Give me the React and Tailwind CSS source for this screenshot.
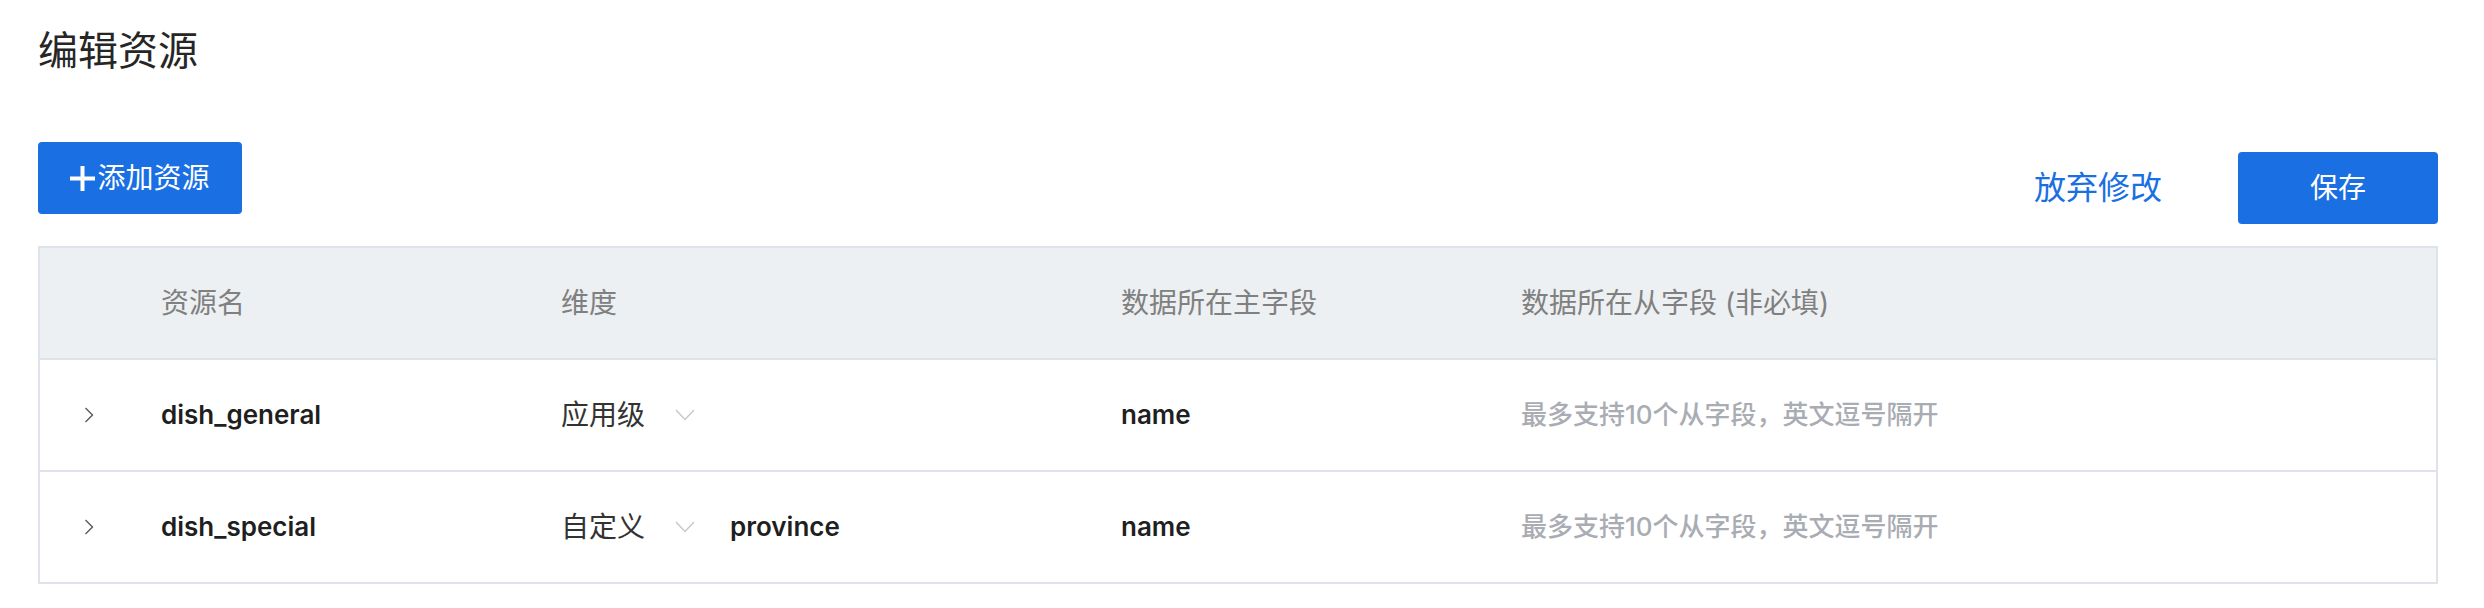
const rows = [
    { name: 'dish_general', level: '应用级', extra: '', field: 'name' },
    { name: 'dish_special', level: '自定义', extra: 'province', field: 'name' }
]

const cjk = { fontFamily: 'Inter, "Noto Sans CJK SC", sans-serif' }

function ArrowRight() {
    return (
        <svg width="10" height="16" viewBox="0 0 10 16" fill="none">
            <polyline points="1.5,1 8.5,8 1.5,15" stroke="#555a63" strokeWidth="1.4" />
        </svg>
    )
}

function ArrowDown() {
    return (
        <svg width="20" height="12" viewBox="0 0 20 12" fill="none">
            <polyline points="1,1 10,10.5 19,1" stroke="#c4c7ce" strokeWidth="1.4" />
        </svg>
    )
}

function App() {
    return (
        <div className="min-h-[608px] w-full bg-white pl-[38px] pr-[46px] pt-[31px]" style={cjk}>
            <h1 className="text-[40px] leading-none font-normal text-[#262626]">编辑资源</h1>

            <div className="mt-[71px] flex items-start justify-between">
                <button
                    type="button"
                    className="flex h-[72px] w-[204px] items-center justify-center rounded-[4px] bg-[#1a6fe3] text-[28px] leading-none text-white"
                >
                    <svg width="25" height="25" viewBox="0 0 25 25" className="mr-[2px]">
                        <rect x="10.5" y="0" width="4" height="25" fill="white" />
                        <rect x="0" y="10.5" width="25" height="4" fill="white" />
                    </svg>
                    添加资源
                </button>

                <div className="mt-[10px] flex items-center gap-[76px]">
                    <span className="text-[32px] leading-none text-[#1a6fe3]">放弃修改</span>
                    <button
                        type="button"
                        className="flex h-[72px] w-[200px] items-center justify-center rounded-[4px] bg-[#1a6fe3] text-[28px] leading-none text-white"
                    >
                        保存
                    </button>
                </div>
            </div>

            <div className="mt-[22px] border-2 border-[#dfe2e9]">
                <div className="grid h-[110px] grid-cols-[121px_400px_560px_400px_1fr] items-center bg-[#edf0f3] text-[28px] leading-none text-[#808080]">
                    <div />
                    <div>资源名</div>
                    <div>维度</div>
                    <div>数据所在主字段</div>
                    <div>数据所在从字段 (非必填)</div>
                </div>

                {rows.map((row) => (
                    <div
                        key={row.name}
                        className="grid h-[112px] grid-cols-[121px_400px_560px_400px_1fr] items-center border-t-2 border-[#dfe2e9]"
                    >
                        <div className="flex items-center pl-[44px]">
                            <ArrowRight />
                        </div>
                        <div className="text-[26px] font-semibold leading-none text-[#1f1f1f]">{row.name}</div>
                        <div className="flex items-center">
                            <span className="text-[28px] leading-none text-[#333333]">{row.level}</span>
                            <span className="ml-[30px] flex items-center">
                                <ArrowDown />
                            </span>
                            {row.extra && (
                                <span className="ml-[35px] text-[26px] font-semibold leading-none text-[#1f1f1f]">{row.extra}</span>
                            )}
                        </div>
                        <div className="text-[26px] font-semibold leading-none text-[#1f1f1f]">{row.field}</div>
                        <div className="text-[26px] font-medium leading-none text-[#a9acb3]">最多支持10个从字段，英文逗号隔开</div>
                    </div>
                ))}
            </div>
        </div>
    )
}

export default App
